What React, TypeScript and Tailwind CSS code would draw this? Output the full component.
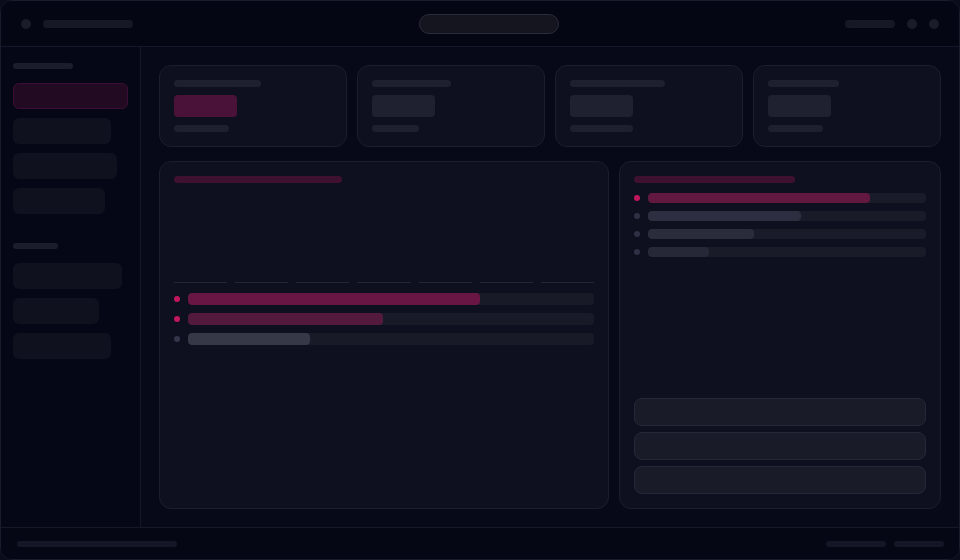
import React from "react";

const stats = [
  { label: "w-[87px]", sub: "w-[55px]", accent: true },
  { label: "w-[79px]", sub: "w-[47px]", accent: false },
  { label: "w-[95px]", sub: "w-[63px]", accent: false },
  { label: "w-[71px]", sub: "w-[55px]", accent: false },
];

const navTop = ["w-[98px]", "w-[104px]", "w-[92px]"];
const navBottom = ["w-[109px]", "w-[86px]", "w-[98px]"];

const leftRows = [
  { pct: 72, dot: "bg-[#c0175d]", fill: "bg-[#6a1645]" },
  { pct: 48, dot: "bg-[#c0175d]", fill: "bg-[#541a3e]" },
  { pct: 30, dot: "bg-[#33354a]", fill: "bg-[#363847]" },
];

const rightRows = [
  { pct: 80, dot: "bg-[#c0175d]", fill: "bg-[#63183f]" },
  { pct: 55, dot: "bg-[#2e3044]", fill: "bg-[#2d2f40]" },
  { pct: 38, dot: "bg-[#2e3044]", fill: "bg-[#2a2c3b]" },
  { pct: 22, dot: "bg-[#2e3044]", fill: "bg-[#262837]" },
];

function Sidebar() {
  return (
    <aside className="flex w-[140px] shrink-0 flex-col border-r border-[#161829] bg-[#060716] px-3 pt-4">
      <div className="h-[6px] w-[60px] rounded-full bg-[#1b1d2d]" />
      <div className="mt-[14px] flex flex-col gap-[9px]">
        <div className="h-[26px] w-[115px] rounded-md border border-[#3a0e34] bg-[#220a23]" />
        {navTop.map((w, i) => (
          <div key={i} className={`h-[26px] ${w} rounded-md bg-[#0f111f]`} />
        ))}
      </div>
      <div className="mt-[29px] h-[6px] w-[45px] rounded-full bg-[#1b1d2d]" />
      <div className="mt-[14px] flex flex-col gap-[9px]">
        {navBottom.map((w, i) => (
          <div key={i} className={`h-[26px] ${w} rounded-md bg-[#0f111f]`} />
        ))}
      </div>
    </aside>
  );
}

function StatCard({ label, sub, accent }: { label: string; sub: string; accent: boolean }) {
  return (
    <div className="flex flex-col rounded-xl border border-[#1c1e2f] bg-[#0e1020] p-[14px]">
      <div className={`h-[7px] ${label} rounded-full bg-[#1e2030]`} />
      <div
        className={`mt-2 h-[22px] w-[63px] rounded ${accent ? "bg-[#4a1238]" : "bg-[#1f2131]"}`}
      />
      <div className={`mt-2 h-[7px] ${sub} rounded-full bg-[#1e2030]`} />
    </div>
  );
}

export default function App() {
  return (
    <div className="h-[560px] w-[960px] bg-[#0b0c19]">
      <div className="flex h-full w-full flex-col overflow-hidden rounded-xl border border-[#1a1c2d] bg-[#070918]">
        {/* top bar */}
        <header className="flex h-[46px] shrink-0 items-center justify-between border-b border-[#161829] bg-[#050614] px-5">
          <div className="flex items-center gap-3">
            <div className="h-[10px] w-[10px] rounded-full bg-[#1a1c2a]" />
            <div className="h-[8px] w-[90px] rounded-full bg-[#161826]" />
          </div>
          <div className="h-[20px] w-[140px] rounded-full border border-[#2a2c3c] bg-[#14151f]" />
          <div className="flex items-center gap-3">
            <div className="h-[8px] w-[50px] rounded-full bg-[#161826]" />
            <div className="h-[10px] w-[10px] rounded-full bg-[#1a1c2a]" />
            <div className="h-[10px] w-[10px] rounded-full bg-[#1a1c2a]" />
          </div>
        </header>

        <div className="flex min-h-0 flex-1">
          <Sidebar />

          <main className="flex flex-1 flex-col gap-[14px] p-[18px]">
            <div className="grid grid-cols-4 gap-[10px]">
              {stats.map((s, i) => (
                <StatCard key={i} {...s} />
              ))}
            </div>

            <div className="flex min-h-0 flex-1 gap-[10px]">
              {/* chart panel */}
              <section className="flex w-[450px] flex-col rounded-xl border border-[#1c1e2f] bg-[#0e1020] p-[14px]">
                <div className="h-[7px] w-[168px] rounded-full bg-[#3f1131]" />
                <div className="flex h-[100px] items-end gap-2">
                  {Array.from({ length: 7 }).map((_, i) => (
                    <div key={i} className="h-px flex-1 bg-[#22243a]" />
                  ))}
                </div>
                <div className="mt-[10px] flex flex-col gap-2">
                  {leftRows.map((r, i) => (
                    <div key={i} className="flex items-center gap-2">
                      <div className={`h-[6px] w-[6px] rounded-full ${r.dot}`} />
                      <div className="h-[12px] flex-1 overflow-hidden rounded bg-[#181a28]">
                        <div className={`h-full rounded ${r.fill}`} style={{ width: `${r.pct}%` }} />
                      </div>
                    </div>
                  ))}
                </div>
              </section>

              {/* list panel */}
              <section className="flex flex-1 flex-col rounded-xl border border-[#1c1e2f] bg-[#0e1020] p-[14px]">
                <div className="h-[7px] w-[161px] rounded-full bg-[#3f1131]" />
                <div className="mt-[10px] flex flex-col gap-2">
                  {rightRows.map((r, i) => (
                    <div key={i} className="flex items-center gap-2">
                      <div className={`h-[6px] w-[6px] rounded-full ${r.dot}`} />
                      <div className="h-[10px] flex-1 overflow-hidden rounded bg-[#191b29]">
                        <div className={`h-full rounded ${r.fill}`} style={{ width: `${r.pct}%` }} />
                      </div>
                    </div>
                  ))}
                </div>
                <div className="mt-auto flex flex-col gap-[6px]">
                  {[0, 1, 2].map((i) => (
                    <div key={i} className="h-[28px] rounded-lg border border-[#262838] bg-[#191b28]" />
                  ))}
                </div>
              </section>
            </div>
          </main>
        </div>

        {/* footer */}
        <footer className="flex h-[32px] shrink-0 items-center justify-between border-t border-[#161829] bg-[#060714] pl-4 pr-[15px]">
          <div className="h-[6px] w-[160px] rounded-full bg-[#151726]" />
          <div className="flex items-center gap-2">
            <div className="h-[6px] w-[60px] rounded-full bg-[#151726]" />
            <div className="h-[6px] w-[50px] rounded-full bg-[#151726]" />
          </div>
        </footer>
      </div>
    </div>
  );
}
